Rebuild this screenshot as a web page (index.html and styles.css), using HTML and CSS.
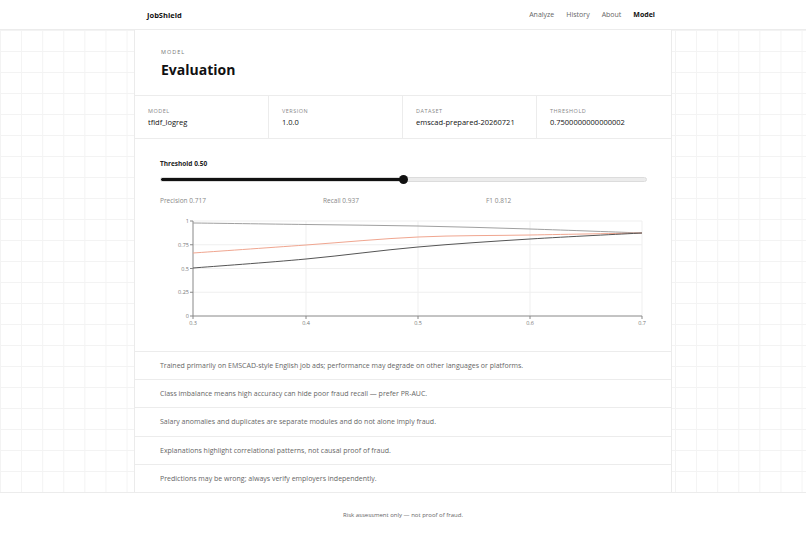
FILE: index.html
```html
<!DOCTYPE html>
<html lang="en">
<head>
<meta charset="utf-8">
<title>JobShield — Model</title>
<link rel="stylesheet" href="styles.css">
</head>
<body>
<header class="topbar">
  <div class="topbar-inner">
    <div class="brand">JobShield</div>
    <nav class="nav">
      <a href="#">Analyze</a>
      <a href="#">History</a>
      <a href="#">About</a>
      <a href="#" class="active">Model</a>
    </nav>
  </div>
</header>
<main class="main">
  <section class="panel">
    <div class="title-block">
      <div class="eyebrow">MODEL</div>
      <h1 class="title">Evaluation</h1>
    </div>
    <div class="meta">
      <div class="meta-cell"><div class="meta-label">MODEL</div><div class="meta-value">tfidf_logreg</div></div>
      <div class="meta-cell"><div class="meta-label">VERSION</div><div class="meta-value">1.0.0</div></div>
      <div class="meta-cell"><div class="meta-label">DATASET</div><div class="meta-value">emscad-prepared-20260721</div></div>
      <div class="meta-cell"><div class="meta-label">THRESHOLD</div><div class="meta-value">0.7500000000000002</div></div>
    </div>
    <div class="chart-block">
      <div class="thr-label">Threshold 0.50</div>
      <input class="slider" type="range" min="0" max="1" step="0.01" value="0.5">
      <div class="metrics">
        <span>Precision 0.717</span>
        <span>Recall 0.937</span>
        <span>F1 0.812</span>
      </div>
      <svg class="chart" width="489" height="116" viewBox="0 0 489 116">
        <g class="grid">
          <line x1="33" y1="7" x2="482" y2="7"/>
          <line x1="33" y1="30.75" x2="482" y2="30.75"/>
          <line x1="33" y1="54.5" x2="482" y2="54.5"/>
          <line x1="33" y1="78.25" x2="482" y2="78.25"/>
          <line x1="146" y1="7" x2="146" y2="102"/>
          <line x1="258" y1="7" x2="258" y2="102"/>
          <line x1="370" y1="7" x2="370" y2="102"/>
          <line x1="482" y1="7" x2="482" y2="102"/>
        </g>
        <g class="axis">
          <line x1="33" y1="7" x2="33" y2="102"/>
          <line x1="33" y1="102" x2="482" y2="102"/>
          <line x1="30" y1="7" x2="33" y2="7"/>
          <line x1="30" y1="30.75" x2="33" y2="30.75"/>
          <line x1="30" y1="54.5" x2="33" y2="54.5"/>
          <line x1="30" y1="78.25" x2="33" y2="78.25"/>
          <line x1="30" y1="102" x2="33" y2="102"/>
          <line x1="33" y1="102" x2="33" y2="105"/>
          <line x1="146" y1="102" x2="146" y2="105"/>
          <line x1="258" y1="102" x2="258" y2="105"/>
          <line x1="370" y1="102" x2="370" y2="105"/>
          <line x1="482" y1="102" x2="482" y2="105"/>
        </g>
        <g class="ylabels">
          <text x="29" y="9">1</text>
          <text x="29" y="32.75">0.75</text>
          <text x="29" y="56.5">0.5</text>
          <text x="29" y="80.25">0.25</text>
          <text x="29" y="104">0</text>
        </g>
        <g class="xlabels">
          <text x="33" y="111">0.3</text>
          <text x="146" y="111">0.4</text>
          <text x="258" y="111">0.5</text>
          <text x="370" y="111">0.6</text>
          <text x="482" y="111">0.7</text>
        </g>
        <path class="ln-recall" d="M33,9 C51.8,9.2 108.5,10 146,10.5 C183.5,11 220.7,11.3 258,12 C295.3,12.8 332.7,13.8 370,15 C407.3,16.2 463.3,18.3 482,19"/>
        <path class="ln-f1" d="M33,39 C51.8,37.7 108.5,33.7 146,31 C183.5,28.3 220.7,24.7 258,23 C295.3,21.3 332.7,21.7 370,21 C407.3,20.3 463.3,19.3 482,19"/>
        <path class="ln-prec" d="M33,54 C51.8,52.5 108.5,48.5 146,45 C183.5,41.5 220.7,36.3 258,33 C295.3,29.7 332.7,27.3 370,25 C407.3,22.7 463.3,20 482,19"/>
      </svg>
    </div>
    <ul class="notes">
      <li>Trained primarily on EMSCAD-style English job ads; performance may degrade on other languages or platforms.</li>
      <li>Class imbalance means high accuracy can hide poor fraud recall — prefer PR-AUC.</li>
      <li>Salary anomalies and duplicates are separate modules and do not alone imply fraud.</li>
      <li>Explanations highlight correlational patterns, not causal proof of fraud.</li>
      <li>Predictions may be wrong; always verify employers independently.</li>
    </ul>
  </section>
</main>
<footer class="footer">Risk assessment only — not proof of fraud.</footer>
</body>
</html>
```

FILE: styles.css
```css
* { box-sizing: border-box; }
html, body { margin: 0; padding: 0; }
body {
  font-family: "Open Sans", "Noto Sans", "Liberation Sans", sans-serif;
  color: #111;
  background: #fff;
  width: 806px;
  height: 536px;
  overflow: hidden;
}
.topbar {
  height: 30px;
  border-bottom: 1px solid #ececec;
  background: #fff;
}
.topbar-inner {
  width: 508px;
  margin-left: 147px;
  height: 29px;
  display: flex;
  align-items: center;
  justify-content: space-between;
}
.brand {
  font-size: 7.5px;
  font-weight: 700;
  color: #111;
}
.nav { display: flex; gap: 12px; }
.nav a {
  font-size: 7px;
  color: #666;
  text-decoration: none;
}
.nav a.active { color: #111; font-weight: 700; }

.main {
  height: 462px;
  background-color: #fff;
  background-image:
    linear-gradient(#f3f3f3 1px, transparent 1px),
    linear-gradient(90deg, #f3f3f3 1px, transparent 1px);
  background-size: 21.1px 21px;
  background-position: 0 0;
}
.panel {
  width: 538px;
  margin-left: 134px;
  height: 462px;
  background: rgba(255, 255, 255, 0.94);
  border-left: 1px solid #ebebeb;
  border-right: 1px solid #ebebeb;
  display: flex;
  flex-direction: column;
}
.title-block {
  height: 65px;
  padding: 18px 0 0 26px;
}
.eyebrow {
  font-size: 5.5px;
  letter-spacing: 1px;
  color: #777;
  line-height: 8px;
}
.title {
  margin: 4px 0 0;
  font-size: 14px;
  font-weight: 700;
  line-height: 20px;
  color: #111;
}
.meta {
  height: 43px;
  border-top: 1px solid #ececec;
  display: grid;
  grid-template-columns: repeat(4, 1fr);
}
.meta-cell {
  padding: 11px 13px 0;
  border-right: 1px solid #ececec;
}
.meta-cell:last-child { border-right: none; }
.meta-label {
  font-size: 5.5px;
  letter-spacing: 0.5px;
  color: #888;
  line-height: 9px;
}
.meta-value {
  font-size: 7.5px;
  color: #111;
  line-height: 12px;
  margin-top: 0;
}
.chart-block {
  height: 213px;
  border-top: 1px solid #ececec;
  padding: 20px 22px 0 25px;
}
.thr-label {
  font-size: 6.5px;
  font-weight: 700;
  color: #222;
  line-height: 10px;
}
.slider {
  -webkit-appearance: none;
  appearance: none;
  display: block;
  width: 487px;
  height: 5px;
  margin: 8px 0 0;
  border: 1px solid #dcdcdc;
  border-radius: 3px;
  background: linear-gradient(90deg, #111 50%, #ececec 50%);
  outline: none;
}
.slider::-webkit-slider-thumb {
  -webkit-appearance: none;
  appearance: none;
  width: 9px;
  height: 9px;
  border-radius: 50%;
  background: #111;
  border: none;
}
.metrics {
  display: grid;
  grid-template-columns: repeat(3, 163px);
  margin-top: 14px;
  font-size: 6.5px;
  color: #888;
  line-height: 10px;
}
.chart {
  display: block;
  margin-top: 8px;
  overflow: visible;
}
.grid line { stroke: #efefef; stroke-width: 1; }
.axis line { stroke: #888; stroke-width: 1; }
.ylabels text, .xlabels text {
  font-family: "Open Sans", "Noto Sans", sans-serif;
  font-size: 5.5px;
  fill: #777;
}
.ylabels text { text-anchor: end; }
.xlabels text { text-anchor: middle; }
.ln-recall, .ln-f1, .ln-prec { fill: none; stroke-width: 1; }
.ln-recall { stroke: #a0a0a0; }
.ln-f1 { stroke: #f0a690; }
.ln-prec { stroke: #555555; }

.notes {
  list-style: none;
  margin: 0;
  padding: 0;
  flex: 1;
}
.notes li {
  height: 28.2px;
  border-top: 1px solid #ececec;
  padding-left: 25px;
  display: flex;
  align-items: center;
  font-size: 7px;
  color: #666;
}
.footer {
  height: 44px;
  border-top: 1px solid #ececec;
  display: flex;
  align-items: center;
  justify-content: center;
  font-size: 6px;
  color: #666;
  background: #fff;
}
```
